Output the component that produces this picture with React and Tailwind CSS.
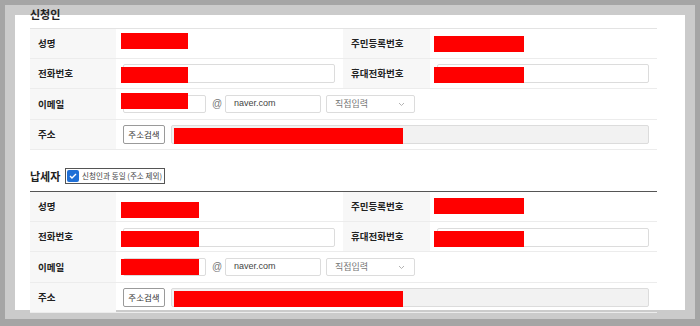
import React from 'react';

// Redaction block lying over a cell
const Red = ({ className = '' }) => <div className={`absolute bg-[#ff0000] ${className}`} />;

const Label = ({ children }) => (
  <div className="bg-[#f7f7f7] flex items-center pl-[8px] text-[9.5px] font-bold text-[#222]">{children}</div>
);

const Input = ({ className = '', children }) => (
  <div className={`absolute border border-[#dcdcdc] rounded-[2px] bg-white flex items-center ${className}`}>{children}</div>
);

const Chevron = () => (
  <svg width="7" height="5" viewBox="0 0 7 5" className="absolute right-[9px]">
    <path d="M1 1l2.5 2.5L6 1" fill="none" stroke="#aaa" strokeWidth="0.9" />
  </svg>
);

// One form table: name/id row, phone row, email row, address row
const FormTable = ({ top, redW, red1, red2, red3, redR1, redR2 }) => (
  <div className={`w-[627px] border-t ${top}`}>
    <div className="grid grid-cols-[86px_227px_87px_227px] h-[30px] border-b border-[#ececec]">
      <Label>성명</Label>
      <div className="relative">
        <Red className={`left-[5px] ${red1} h-[16px] ${redW}`} />
      </div>
      <Label>주민등록번호</Label>
      <div className="relative">
        <Red className={`left-[4px] ${redR1} h-[16px] w-[90px]`} />
      </div>
    </div>
    <div className="grid grid-cols-[86px_227px_87px_227px] h-[30px] border-b border-[#ececec]">
      <Label>전화번호</Label>
      <div className="relative">
        <Input className={`left-[7px] ${red2.input} w-[212px] h-[19px]`} />
        <Red className={`left-[5px] ${red2.red} h-[16px] ${redW}`} />
      </div>
      <Label>휴대전화번호</Label>
      <div className="relative">
        <Input className={`left-[7px] ${red2.input} w-[212px] h-[19px]`} />
        <Red className={`left-[4px] ${redR2} h-[16px] w-[90px]`} />
      </div>
    </div>
    <div className="grid grid-cols-[86px_541px] h-[31px] border-b border-[#ececec]">
      <Label>이메일</Label>
      <div className="relative text-[9px]">
        <Input className={`left-[7px] ${red3.input} w-[83px] h-[18px]`} />
        <Red className={`left-[5px] ${red3.red} h-[16px] ${redW}`} />
        <span className={`absolute left-[96px] ${red3.at} text-[10px] leading-[12px] text-[#777] font-['Liberation_Sans',sans-serif]`}>@</span>
        <Input className={`left-[109px] ${red3.input} w-[96px] h-[18px] pl-[8px] text-[#444] font-['Liberation_Sans',sans-serif]`}>naver.com</Input>
        <Input className={`left-[210px] ${red3.input} w-[89px] h-[18px] pl-[8px] text-[#777]`}>
          직접입력
          <Chevron />
        </Input>
      </div>
    </div>
    <div className="grid grid-cols-[86px_541px] h-[30px] border-b border-[#ececec]">
      <Label>주소</Label>
      <div className="flex items-center pl-[7px] gap-[6px]">
        <div className="h-[19px] w-[42px] border border-[#9a9a9a] rounded-[2px] flex items-center justify-center text-[8.5px] text-[#333] bg-white">주소검색</div>
        <div className="relative h-[19px] w-[478px] bg-[#f2f2f2] border border-[#dcdcdc] rounded-[2px]">
          <Red className="left-[2px] top-[2px] h-[16px] w-[229px]" />
        </div>
      </div>
    </div>
  </div>
);

export default function App() {
  return (
    <div className="w-[700px] h-[326px] bg-[#a5a5a5] pt-[5px] pl-[5px] pr-[5px] pb-[7px] font-['Noto_Sans_CJK_KR','Noto_Sans',sans-serif]">
      <div className="w-[690px] h-[314px] bg-[#cbcbcb] pt-[10px] pl-[10px]">
        <div className="w-[670px] h-[295px] bg-white pl-[15px] flex flex-col">
          <div className="h-[14px] leading-[14px] -mt-[8px] mb-[7px] text-[11px] font-bold text-[#222]">신청인</div>
          <FormTable
            top="border-[#e3e3e3]"
            redW="w-[67px]"
            red1="top-[4px]"
            redR1="top-[7px]"
            red2={{ input: 'top-[5px]', red: 'top-[8px]' }}
            redR2="top-[8px]"
            red3={{ input: 'top-[6px]', red: 'top-[4px]', at: 'top-[9px]' }}
          />
          <div className="flex items-center h-[16px] mt-[18px] mb-[7px]">
            <span className="text-[11px] font-bold text-[#222] w-[35px]">납세자</span>
            <div className="flex items-center h-[16px] w-[100px] border border-[#555] pl-[1px] gap-[3px]">
              <div className="w-[12px] h-[12px] rounded-[2px] bg-[#1f6fd6] flex items-center justify-center">
                <svg width="8" height="6" viewBox="0 0 8 6">
                  <path d="M1 3l2 2 4-4" fill="none" stroke="#fff" strokeWidth="1.4" />
                </svg>
              </div>
              <span className="text-[7.6px] text-[#444] whitespace-nowrap">신청인과 동일 (주소 제외)</span>
            </div>
          </div>
          <FormTable
            top="border-[#555]"
            redW="w-[78px]"
            red1="top-[10px]"
            redR1="top-[6px]"
            red2={{ input: 'top-[6px]', red: 'top-[9px]' }}
            redR2="top-[9px]"
            red3={{ input: 'top-[6px]', red: 'top-[7px]', at: 'top-[9px]' }}
          />
        </div>
      </div>
    </div>
  );
}
